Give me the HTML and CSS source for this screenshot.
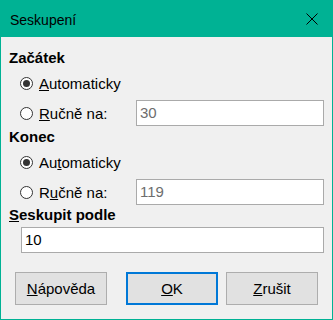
FILE: index.html
```html
<!DOCTYPE html>
<html lang="cs">
<head>
  <meta charset="UTF-8" />
  <meta name="viewport" content="width=device-width, initial-scale=1.0" />
  <title>Seskupení</title>
  <link rel="stylesheet" href="styles.css">
</head>
<body>
  <div class="dialog">
    <div class="titlebar">
      <span class="title">Seskupení</span>
      <svg class="close" width="12" height="12" viewBox="0 0 12 12">
        <path d="M0.5 0.5 L11.5 11.5 M11.5 0.5 L0.5 11.5" stroke="#000" stroke-width="1" fill="none" />
      </svg>
    </div>

    <div class="content">
      <div class="heading">Začátek</div>
      <div class="row">
        <label class="radio"><span class="dot checked"></span><span><u>A</u>utomaticky</span></label>
      </div>
      <div class="row">
        <label class="radio"><span class="dot"></span><span><u>R</u>učně na:</span></label>
        <div class="field disabled">30</div>
      </div>

      <div class="heading">Konec</div>
      <div class="row">
        <label class="radio"><span class="dot checked"></span><span>Au<u>t</u>omaticky</span></label>
      </div>
      <div class="row">
        <label class="radio"><span class="dot"></span><span>R<u>u</u>čně na:</span></label>
        <div class="field disabled">119</div>
      </div>

      <div class="heading last"><u>S</u>eskupit podle</div>
      <div class="field wide">10</div>
    </div>

    <div class="buttons">
      <button class="btn"><u>N</u>ápověda</button>
      <div class="spacer"></div>
      <button class="btn default"><u>O</u>K</button>
      <button class="btn"><u>Z</u>rušit</button>
    </div>
  </div>
</body>
</html>
```

FILE: styles.css
```css
body {
  margin: 0;
  font-family: "Liberation Sans", Arial, sans-serif;
  font-size: 15px;
  color: #000;
}
.dialog {
  width: 333px;
  height: 320px;
  box-sizing: border-box;
  border: 1px solid #00b294;
  border-top: none;
  background: #f0f0f0;
  display: flex;
  flex-direction: column;
}
.titlebar {
  height: 37px;
  background: #00b294;
  display: flex;
  align-items: center;
  justify-content: space-between;
  padding: 0 15px 0 10px;
  margin: 0 -1px;
}
.title {
  font-size: 14px;
  padding-top: 3px;
}
.close {
  display: block;
  margin-top: 1px;
}
.content {
  padding: 12px 8px 0 8px;
  display: flex;
  flex-direction: column;
}
.heading {
  font-weight: bold;
  line-height: 18px;
  margin-bottom: 3px;
}
.heading.last {
  margin-top: -1px;
}
.row {
  height: 26px;
  display: grid;
  grid-template-columns: 127px 1fr;
  align-items: center;
  margin-bottom: 4px;
}
.row + .row {
  margin-bottom: 2px;
}
.radio {
  display: flex;
  align-items: center;
  gap: 6px;
  padding-left: 11px;
}
.dot {
  width: 11px;
  height: 11px;
  border: 1px solid #333;
  border-radius: 50%;
  background: #fff;
  position: relative;
  flex: none;
}
.dot.checked::after {
  content: "";
  position: absolute;
  left: 2px;
  top: 2px;
  width: 7px;
  height: 7px;
  border-radius: 50%;
  background: #333;
}
.field {
  height: 26px;
  box-sizing: border-box;
  border: 1px solid #aaa;
  background: #fff;
  padding: 0 3px;
  line-height: 24px;
}
.field.disabled {
  color: #6d6d6d;
}
.field.wide {
  margin: 0 0 0 12px;
}
.buttons {
  display: flex;
  gap: 8px;
  padding: 0 14px;
  margin-top: 19px;
}
.spacer {
  flex: 1;
}
.btn {
  width: 92px;
  height: 33px;
  box-sizing: border-box;
  border: 1px solid #adadad;
  background: #e1e1e1;
  font-family: inherit;
  font-size: 15px;
  color: #000;
  padding: 0;
}
.btn.default {
  border: 2px solid #0078d7;
}
```
